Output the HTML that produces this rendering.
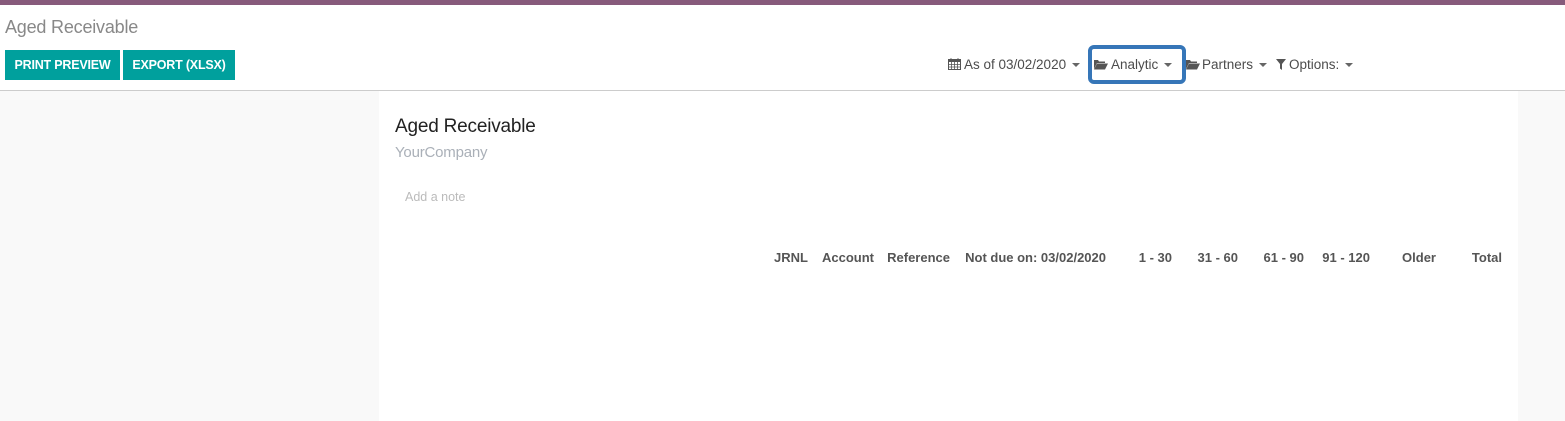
<!DOCTYPE html>
<html><head><meta charset="utf-8">
<style>
*{margin:0;padding:0;box-sizing:border-box}
body{width:1565px;height:421px;overflow:hidden;background:#fff;font-family:"Liberation Sans",sans-serif;position:relative}
.abs{position:absolute;white-space:nowrap}
.topbar{left:0;top:0;width:1565px;height:5px;background:#875A7B}
.title{left:5px;top:17px;font-size:18px;color:#888;letter-spacing:-0.2px}
.btn{top:50px;height:30px;background:#00A09D;color:#fff;font-weight:bold;font-size:12.5px;line-height:30px;text-align:center;letter-spacing:-0.2px}
.line{left:0;top:90px;width:1565px;height:1px;background:#ccc}
.bg{left:0;top:91px;width:1565px;height:330px;background:#f9f9f9}
.sheet{left:379px;top:91px;width:1139px;height:330px;background:#fff}
.f{top:57px;font-size:13.5px;color:#4c4c4c}
.caret{display:inline-block;width:0;height:0;border-left:4px solid transparent;border-right:4px solid transparent;border-top:4px solid #666;vertical-align:middle;margin-left:6px}
.hl{left:1088px;top:45px;width:98px;height:39px;border:4px solid #3676B8;border-radius:6px}
.th{top:250px;font-size:13px;font-weight:bold;color:#555;letter-spacing:0;text-align:right}
</style></head><body>
<div class="abs topbar"></div>
<div class="abs title">Aged Receivable</div>
<div class="abs btn" style="left:5px;width:115px">PRINT PREVIEW</div>
<div class="abs btn" style="left:123px;width:112px">EXPORT (XLSX)</div>

<div class="abs f" style="left:948px"><svg width="13" height="12" viewBox="0 0 13 12" style="vertical-align:-1px;margin-right:3px"><rect x="0.5" y="1.5" width="12" height="10" fill="none" stroke="#555"/><rect x="0.5" y="1.5" width="12" height="2.5" fill="#555"/><path d="M3 0v3M10 0v3M0.5 6.5h12M0.5 9h12M3.5 4v7M6.5 4v7M9.5 4v7" stroke="#555" stroke-width="0.8"/></svg>As of 03/02/2020<span class="caret"></span></div>
<div class="abs f" style="left:1094px"><svg width="14" height="11" viewBox="0 0 14 11" style="vertical-align:-1px;margin-right:3px"><path d="M0 1h4l1 1.5h6V4H3L0 10z" fill="#555"/><path d="M3 4.5h11L11 10.5H0z" fill="#555"/></svg>Analytic<span class="caret"></span></div>
<div class="abs hl"></div>
<div class="abs f" style="left:1186px"><svg width="14" height="11" viewBox="0 0 14 11" style="vertical-align:-1px;margin-right:2px"><path d="M0 1h4l1 1.5h6V4H3L0 10z" fill="#555"/><path d="M3 4.5h11L11 10.5H0z" fill="#555"/></svg>Partners<span class="caret"></span></div>
<div class="abs f" style="left:1276px"><svg width="10" height="11" viewBox="0 0 10 11" style="vertical-align:-1px;margin-right:3px"><path d="M0 0h10L6 5v6L4 9.5V5z" fill="#555"/></svg>Options:<span class="caret"></span></div>

<div class="abs line"></div>
<div class="abs bg"></div>
<div class="abs sheet"></div>
<div class="abs" style="left:395px;top:116px;font-size:19px;color:#222;letter-spacing:-0.2px">Aged Receivable</div>
<div class="abs" style="left:395px;top:144px;font-size:15px;color:#aab0b8;letter-spacing:-0.2px">YourCompany</div>
<div class="abs" style="left:405px;top:190px;font-size:12.5px;color:#bbb">Add a note</div>

<div class="abs th" style="right:757px">JRNL</div>
<div class="abs th" style="right:691px">Account</div>
<div class="abs th" style="right:615px">Reference</div>
<div class="abs th" style="right:459px">Not due on: 03/02/2020</div>
<div class="abs th" style="right:393px">1 - 30</div>
<div class="abs th" style="right:327px">31 - 60</div>
<div class="abs th" style="right:261px">61 - 90</div>
<div class="abs th" style="right:195px">91 - 120</div>
<div class="abs th" style="right:129px">Older</div>
<div class="abs th" style="right:63px">Total</div>
</body></html>
